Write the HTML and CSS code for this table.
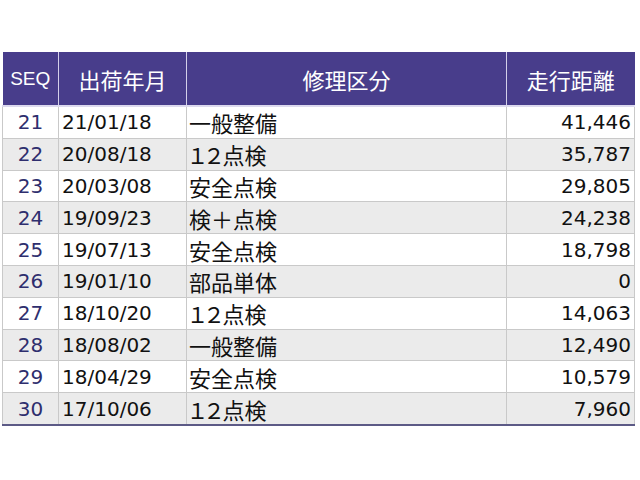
FILE: index.html
```html
<!DOCTYPE html>
<html lang="ja">
<head>
<meta charset="utf-8">
<link rel="stylesheet" href="styles.css">
</head>
<body>
<div class="wrap">
<table class="grid">
<colgroup><col class="c-seq"><col class="c-date"><col class="c-kind"><col class="c-dist"></colgroup>
<thead>
<tr><th class="h-seq">SEQ</th><th>出荷年月</th><th>修理区分</th><th>走行距離</th></tr>
</thead>
<tbody>
<tr><td class="seq">21</td><td class="date">21/01/18</td><td class="kind">一般整備</td><td class="dist">41,446</td></tr>
<tr><td class="seq">22</td><td class="date">20/08/18</td><td class="kind">１２点検</td><td class="dist">35,787</td></tr>
<tr><td class="seq">23</td><td class="date">20/03/08</td><td class="kind">安全点検</td><td class="dist">29,805</td></tr>
<tr><td class="seq">24</td><td class="date">19/09/23</td><td class="kind">検＋点検</td><td class="dist">24,238</td></tr>
<tr><td class="seq">25</td><td class="date">19/07/13</td><td class="kind">安全点検</td><td class="dist">18,798</td></tr>
<tr><td class="seq">26</td><td class="date">19/01/10</td><td class="kind">部品単体</td><td class="dist">0</td></tr>
<tr><td class="seq">27</td><td class="date">18/10/20</td><td class="kind">１２点検</td><td class="dist">14,063</td></tr>
<tr><td class="seq">28</td><td class="date">18/08/02</td><td class="kind">一般整備</td><td class="dist">12,490</td></tr>
<tr><td class="seq">29</td><td class="date">18/04/29</td><td class="kind">安全点検</td><td class="dist">10,579</td></tr>
<tr><td class="seq">30</td><td class="date">17/10/06</td><td class="kind">１２点検</td><td class="dist">7,960</td></tr>
</tbody>
</table>
</div>
</body>
</html>
```
FILE: styles.css
```css
html, body {
  margin: 0;
  padding: 0;
  background: #ffffff;
}
.wrap {
  padding: 52px 6px 0 2px;
}
.grid {
  width: 632px;
  table-layout: fixed;
  border-collapse: collapse;
  font-family: "DejaVu Sans", "Noto Sans CJK JP", sans-serif;
  font-size: 20px;
  color: #111111;
  border-bottom: 2px solid #5c5a86;
}
.c-seq { width: 56px; }
.c-date { width: 128px; }
.c-kind { width: 320px; }
.c-dist { width: 128px; }
.grid th {
  background: #483d8b;
  color: #ffffff;
  font-family: "Noto Sans CJK JP", sans-serif;
  font-weight: normal;
  height: 53px;
  padding: 0;
  text-align: center;
  border-left: 1px solid #d4d0ea;
  border-bottom: 2px solid #dcd9ee;
  font-size: 22px;
}
.grid th:first-child { border-left: none; }
.grid th.h-seq {
  font-family: "Liberation Sans", sans-serif;
  font-size: 19px;
}
.grid td {
  height: 30.8px;
  padding: 0 3px;
  border: 1px solid #c9c9c9;
  line-height: 1;
  white-space: nowrap;
}
.grid tbody tr:nth-child(even) td { background: #ebebeb; }
.grid td.seq {
  text-align: center;
  color: #2e2e6e;
  padding: 0;
}
.grid td.date { text-align: left; }
.grid td.kind {
  text-align: left;
  padding-left: 2px;
  font-family: "Noto Sans CJK JP", sans-serif;
  font-size: 22px;
  font-feature-settings: "palt" 1;
}
.grid td.dist { text-align: right; }
```
